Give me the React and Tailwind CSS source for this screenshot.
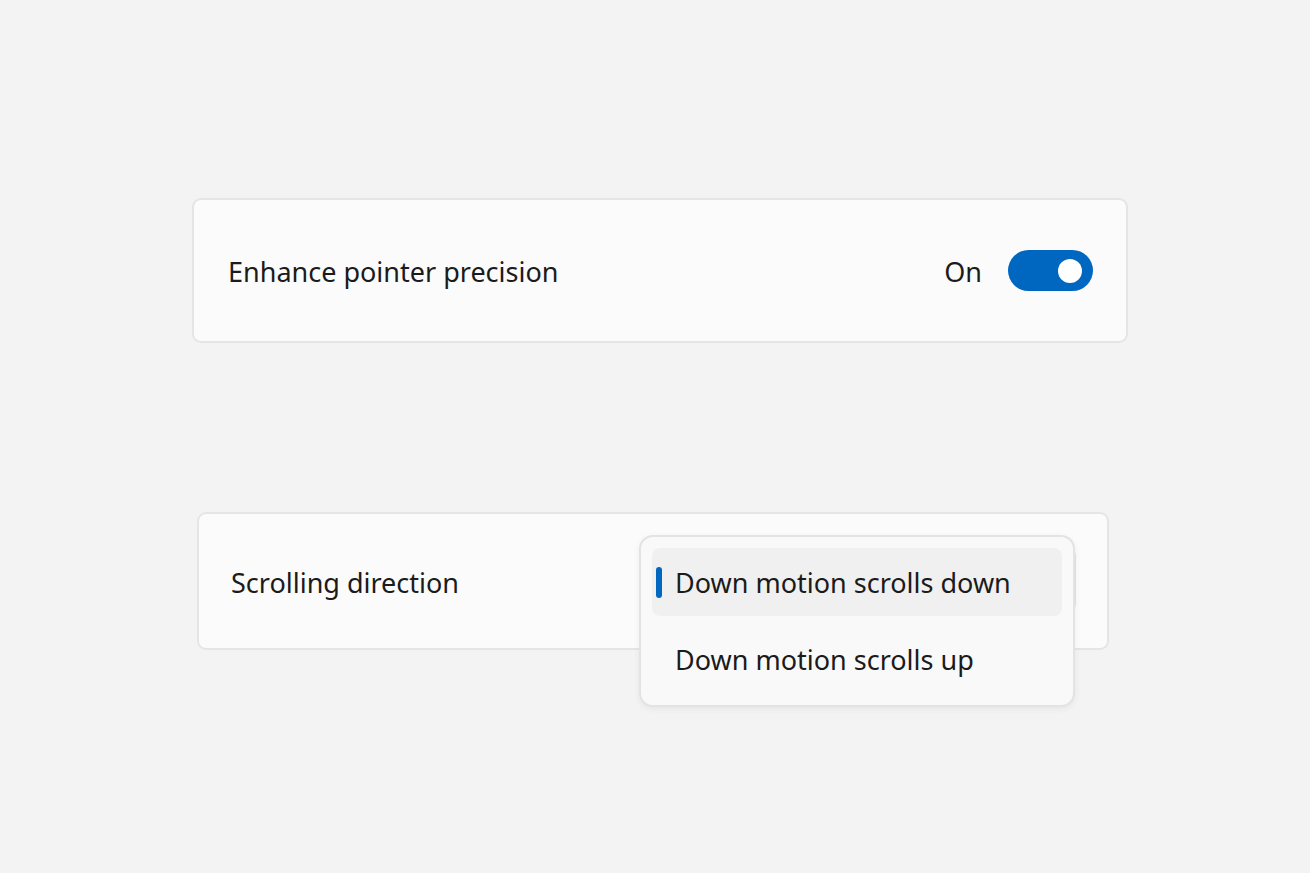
const font = { fontFamily: '"Noto Sans", "Open Sans", Arial, sans-serif' };

const Toggle = () => (
  <div className="w-[85px] h-[41px] rounded-full bg-[#0067c0] flex items-center justify-end pr-[11px]">
    <div className="w-[24px] h-[24px] rounded-full bg-white" />
  </div>
);

export default function App() {
  return (
    <div
      className="min-h-screen bg-[#f3f3f3] pt-[198px] text-[#1b1b1b]"
      style={font}
    >
      {/* Pointer precision card */}
      <div className="ml-[192px] w-[936px] h-[145px] rounded-[9px] border-2 border-[#e5e5e5] bg-[#fbfbfb] flex items-center justify-between pl-[34px] pr-[33px]">
        <span className="text-[27px] leading-none pt-[2px]">Enhance pointer precision</span>
        <div className="flex items-center gap-[26px]">
          <span className="text-[27px] leading-none pt-[2px]">On</span>
          <Toggle />
        </div>
      </div>

      {/* Scrolling direction card */}
      <div className="relative mt-[169px] ml-[197px] w-[912px] h-[138px] rounded-[9px] border-2 border-[#e5e5e5] bg-[#fbfbfb] flex items-center pl-[32px]">
        <span className="text-[27px] leading-none pt-[2px]">Scrolling direction</span>

        {/* combobox edge behind the flyout */}
        <div className="absolute left-[441px] top-[34px] w-[436px] h-[64px] rounded-[8px] border-2 border-[#e2e2e2]" />

        {/* Flyout */}
        <div className="absolute left-[440px] top-[21px] w-[436px] h-[172px] rounded-[14px] border-2 border-[#e3e3e3] bg-[#f9f9f9] shadow-[0_2px_6px_rgba(0,0,0,0.06)] p-[11px] flex flex-col gap-[9px]">
          <div className="relative h-[68px] rounded-[8px] bg-[#f0f0f0] flex items-center pl-[23px]">
            <div className="absolute left-[4px] top-[19px] w-[6px] h-[31px] rounded-full bg-[#0067c0]" />
            <span className="text-[27px] leading-none">Down motion scrolls down</span>
          </div>
          <div className="h-[68px] rounded-[8px] flex items-center pl-[23px]">
            <span className="text-[27px] leading-none">Down motion scrolls up</span>
          </div>
        </div>
      </div>
    </div>
  );
}
